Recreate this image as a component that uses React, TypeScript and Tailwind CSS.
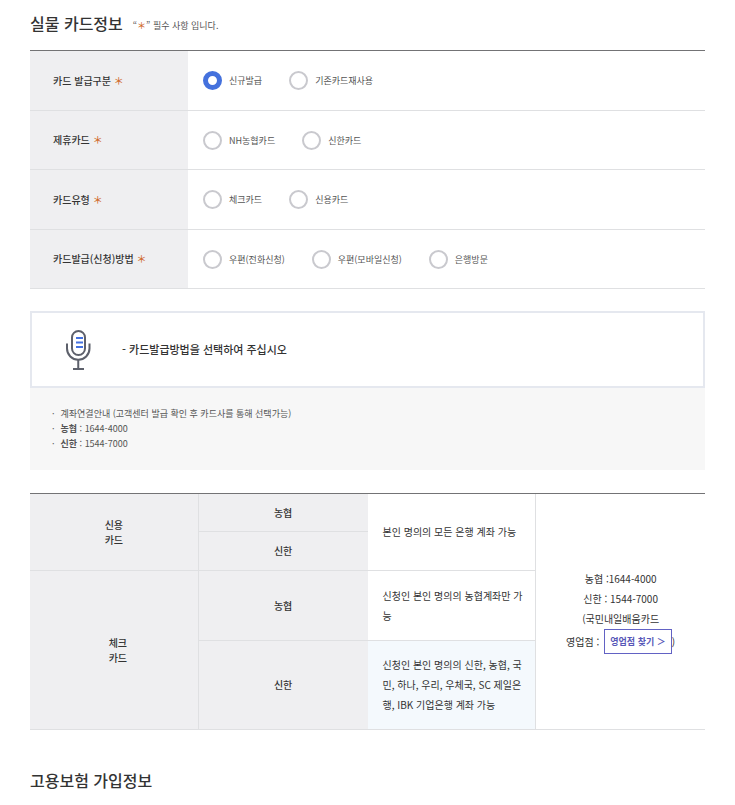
type RadioRow = {
  name: string;
  title: string;
  options: string[];
};

const rows: RadioRow[] = [
  { name: "issue", title: "카드 발급구분", options: ["신규발급", "기존카드재사용"] },
  { name: "partner", title: "제휴카드", options: ["NH농협카드", "신한카드"] },
  { name: "type", title: "카드유형", options: ["체크카드", "신용카드"] },
  {
    name: "method",
    title: "카드발급(신청)방법",
    options: ["우편(전화신청)", "우편(모바일신청)", "은행방문"],
  },
];

const Required = () => <span className="font-medium text-[#d0692a]">＊</span>;

const MicIcon = () => (
  <svg width="26" height="42" viewBox="0 0 26 42" fill="none" aria-hidden="true">
    <rect x="7" y="2" width="13" height="24" rx="6.5" stroke="#5d606b" strokeWidth="2" />
    <path d="M2 14.500v5a11.250 11.250 0 0 0 22.500 0v-5" stroke="#5d606b" strokeWidth="2" />
    <path d="M13.250 31v9M8 40h11" stroke="#5d606b" strokeWidth="2" />
    <path d="M11 9h7M11 13.500h7M11 18h7" stroke="#4471e0" strokeWidth="2" />
  </svg>
);

const RadioOption = ({ name, label, checked }: { name: string; label: string; checked: boolean }) => (
  <label className="flex items-center gap-[7px] text-[9px] text-[#555]">
    <input
      type="radio"
      name={name}
      defaultChecked={checked}
      className="size-[19px] appearance-none rounded-full border-2 border-[#c9c9ce] bg-white checked:border-5 checked:border-[#4471dd]"
    />
    {label}
  </label>
);

const App = () => {
  return (
    <main
      lang="ko"
      className="bg-white px-[30px] pt-[9px] font-['Noto_Sans_CJK_KR',sans-serif] text-[10px] text-[#333]"
    >
      <div className="flex items-center gap-[10px]">
        <h2 className="text-[16px] leading-[28px] font-medium text-[#333]">실물 카드정보</h2>
        <p className="pt-[6px] text-[9px] text-[#555]">
          “<Required />” 필수 사항 입니다.
        </p>
      </div>

      <table className="mt-[13px] h-[239px] w-full border-separate border-spacing-0 border-t border-[#737375]">
        <tbody>
          {rows.map((row) => (
            <tr key={row.name}>
              <th className="w-[158px] border-b border-[#dfe0e2] bg-[#efeff1] pl-[23px] text-left font-medium text-[#333]">
                {row.title} <Required />
              </th>
              <td className="border-b border-[#dfe0e2] pt-px pl-[15px]">
                <div className="flex items-center gap-[27px]">
                  {row.options.map((option, index) => (
                    <RadioOption
                      key={option}
                      name={row.name}
                      label={option}
                      checked={row.name === "issue" && index === 0}
                    />
                  ))}
                </div>
              </td>
            </tr>
          ))}
        </tbody>
      </table>

      <section className="mt-[22px]">
        <div className="flex h-[77px] items-center gap-[31px] border-2 border-[#e5e8ef] pl-[33px]">
          <MicIcon />
          <p className="text-[11px] font-medium text-[#333]">- 카드발급방법을 선택하여 주십시오</p>
        </div>
        <ul className="bg-[#f7f7f7] px-[22px] pt-[18px] pb-[19px] text-[9px] leading-[15px] text-[#555]">
          <li className="flex gap-[6px]">
            <span>·</span>
            <span>계좌연결안내 (고객센터 발급 확인 후 카드사를 통해 선택가능)</span>
          </li>
          <li className="flex gap-[6px]">
            <span>·</span>
            <span>
              <b>농협</b> : 1644-4000
            </span>
          </li>
          <li className="flex gap-[6px]">
            <span>·</span>
            <span>
              <b>신한</b> : 1544-7000
            </span>
          </li>
        </ul>
      </section>

      <table className="mt-[23px] w-full table-fixed border-separate border-spacing-0 border-t border-[#737375] leading-[20px] [&_td]:border-b [&_td]:border-[#dfe0e2] [&_th]:border-b [&_th]:border-[#dfe0e2] [&_th]:bg-[#efeff1] [&_th]:font-medium [&_th]:text-[#333]">
        <tbody>
          <tr className="h-[38px]">
            <th rowSpan={2} className="border-r leading-[15px]">
              신용
              <br />
              카드
            </th>
            <th>농협</th>
            <td rowSpan={2} className="border-r pr-2 pl-[15px]">
              본인 명의의 모든 은행 계좌 가능
            </td>
            <td rowSpan={4} className="text-center">
              농협 :1644-4000
              <br />
              신한 : 1544-7000
              <br />
              (국민내일배움카드
              <br />
              <span className="inline-flex items-center">
                영업점 :
                <a
                  href="#branch"
                  className="ml-[5px] border border-[#6262c4] px-[5px] text-[9px] leading-[23px] font-bold text-[#5757b8]"
                >
                  영업점 찾기 ＞
                </a>
                )
              </span>
            </td>
          </tr>
          <tr className="h-[39px]">
            <th>신한</th>
          </tr>
          <tr className="h-[70px]">
            <th rowSpan={2} className="border-r pl-2 leading-[15px]">
              체크
              <br />
              카드
            </th>
            <th>농협</th>
            <td className="border-r pr-2 pl-[15px] break-all">신청인 본인 명의의 농협계좌만 가능</td>
          </tr>
          <tr className="h-[89px]">
            <th>신한</th>
            <td className="border-r bg-[#f4f9fd] pr-2 pl-[15px] break-all">
              신청인 본인 명의의 신한, 농협, 국민, 하나, 우리, 우체국, SC 제일은행, IBK 기업은행 계좌 가능
            </td>
          </tr>
        </tbody>
      </table>

      <h2 className="mt-9 text-[16px] leading-[28px] font-medium text-[#333]">고용보험 가입정보</h2>
    </main>
  );
};

export default App;
